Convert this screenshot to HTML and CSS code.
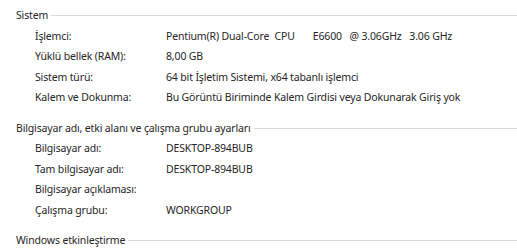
FILE: index.html
```html
<!DOCTYPE html>
<html lang="tr">
<head>
  <meta charset="UTF-8">
  <title>Sistem</title>
  <link rel="stylesheet" href="styles.css">
</head>
<body>

  <div class="group">
    <div class="group-title"><span>Sistem</span></div>
    <div class="rows">
      <div class="label">İşlemci:</div>
      <div class="value">Pentium(R) Dual-Core  CPU       E6600   @ 3.06GHz   3.06 GHz</div>
      <div class="label">Yüklü bellek (RAM):</div>
      <div class="value">8,00 GB</div>
      <div class="label">Sistem türü:</div>
      <div class="value">64 bit İşletim Sistemi, x64 tabanlı işlemci</div>
      <div class="label">Kalem ve Dokunma:</div>
      <div class="value">Bu Görüntü Biriminde Kalem Girdisi veya Dokunarak Giriş yok</div>
    </div>
  </div>

  <div class="group">
    <div class="group-title"><span>Bilgisayar adı, etki alanı ve çalışma grubu ayarları</span></div>
    <div class="rows">
      <div class="label">Bilgisayar adı:</div>
      <div class="value">DESKTOP-894BUB</div>
      <div class="label">Tam bilgisayar adı:</div>
      <div class="value">DESKTOP-894BUB</div>
      <div class="label">Bilgisayar açıklaması:</div>
      <div class="value"></div>
      <div class="label">Çalışma grubu:</div>
      <div class="value">WORKGROUP</div>
    </div>
  </div>

  <div class="group">
    <div class="group-title"><span>Windows etkinleştirme</span></div>
  </div>

</body>
</html>
```

FILE: styles.css
```css
body { margin: 0; padding: 5px 0 0 16px; background: #fff; color: #262626; font-family: "Noto Sans", sans-serif; font-size: 10.5px; letter-spacing: -0.15px; }
.group-title { display: flex; align-items: center; gap: 3px; height: 20px; }
.group-title::after { content: ""; flex: 1; border-top: 1px solid #d9d9d9; margin-top: 1px; }
.rows { display: grid; grid-template-columns: 131px 1fr; grid-auto-rows: 20.5px; align-items: center; padding: 0.5px 0 10px 19px; }
.value { white-space: pre; }
```
